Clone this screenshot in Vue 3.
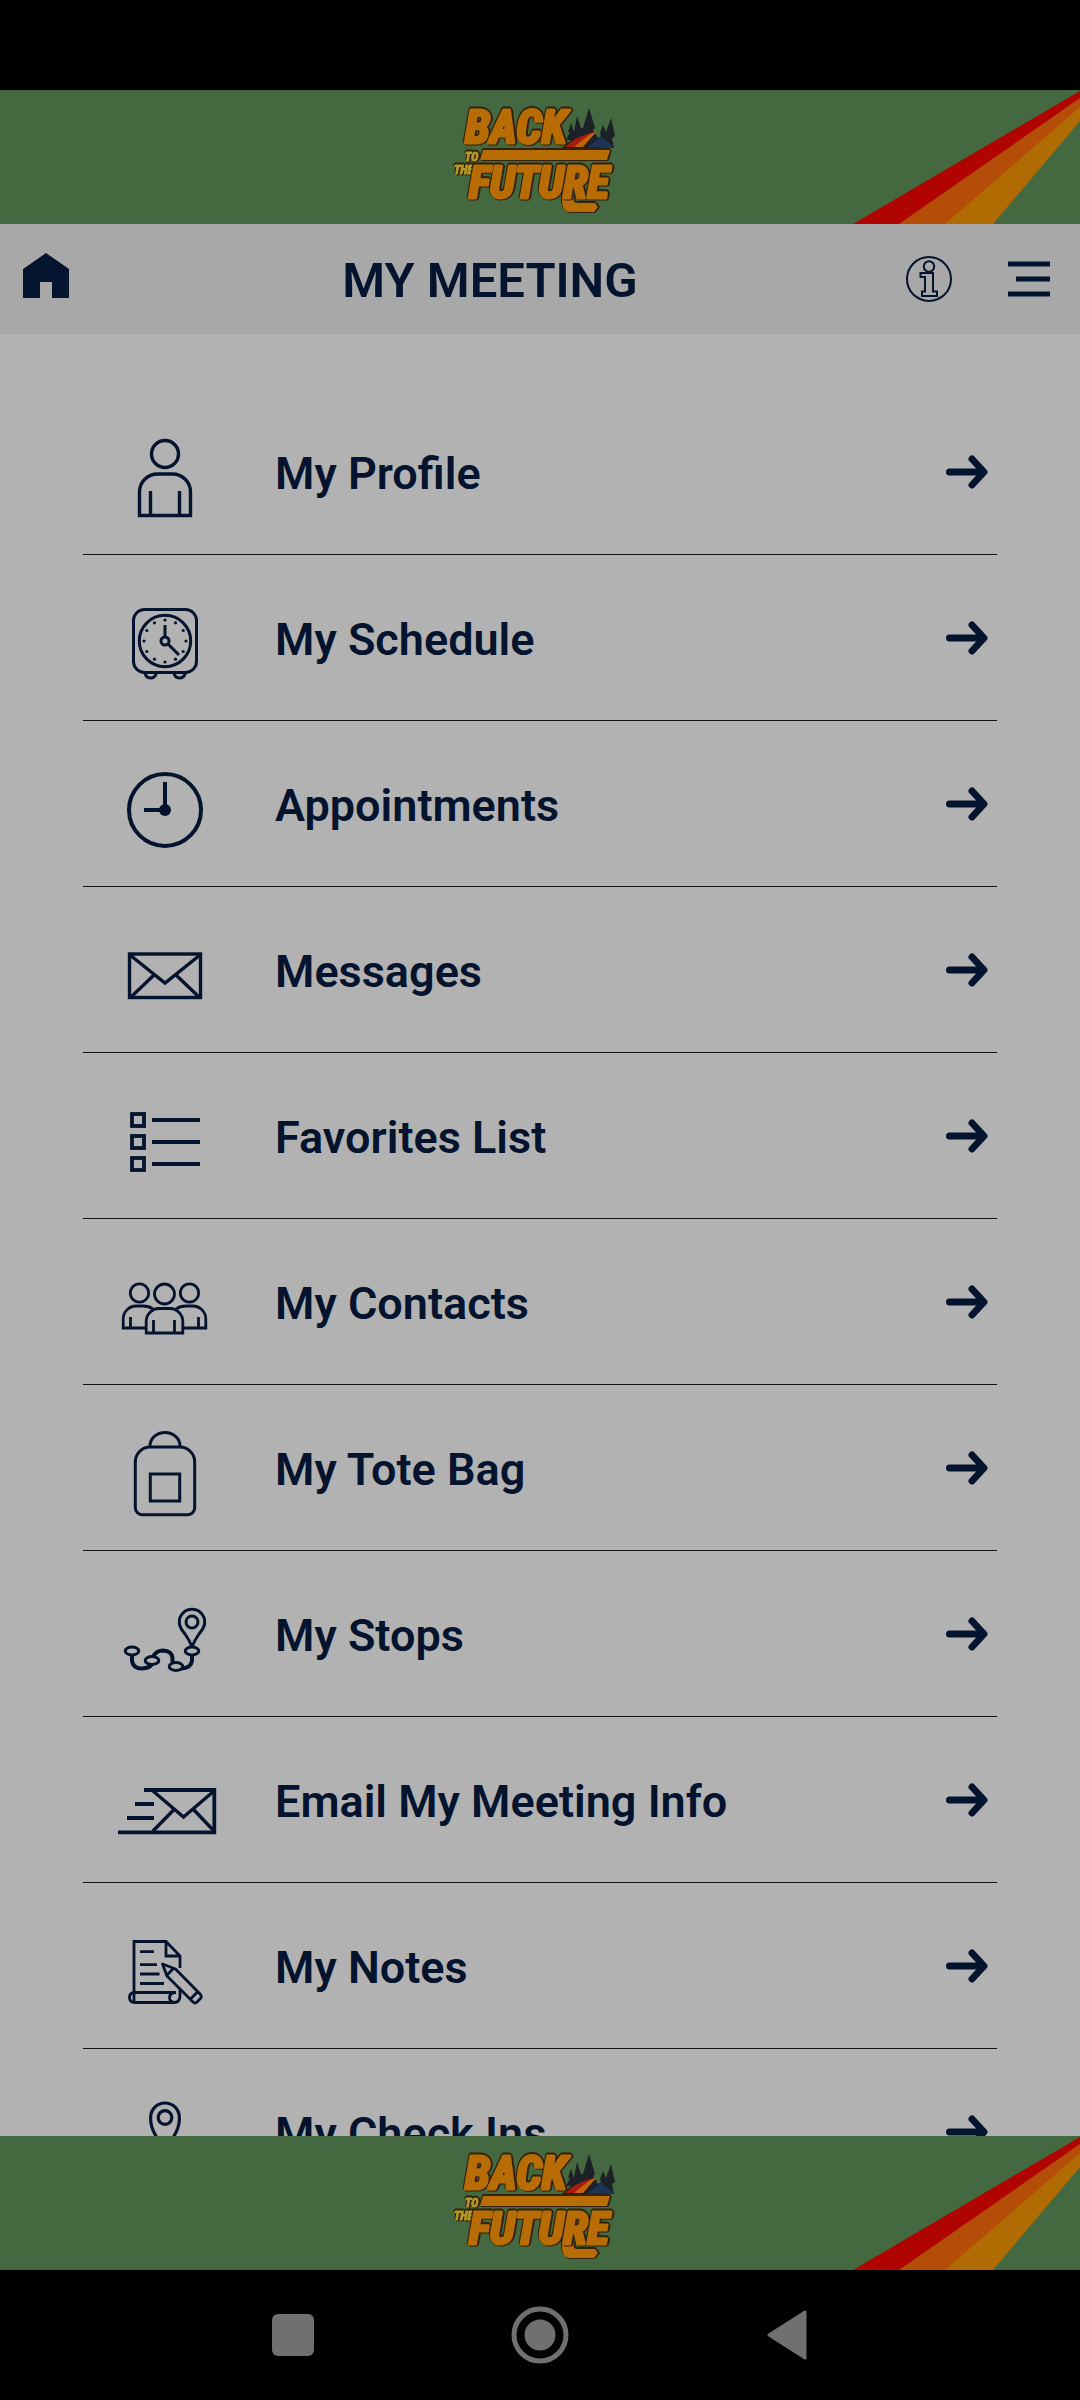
<script setup>
import { h } from 'vue'

const items = [
  { id: 'profile', label: 'My Profile' },
  { id: 'schedule', label: 'My Schedule' },
  { id: 'appointments', label: 'Appointments' },
  { id: 'messages', label: 'Messages' },
  { id: 'favorites', label: 'Favorites List' },
  { id: 'contacts', label: 'My Contacts' },
  { id: 'tote', label: 'My Tote Bag' },
  { id: 'stops', label: 'My Stops' },
  { id: 'email', label: 'Email My Meeting Info' },
  { id: 'notes', label: 'My Notes' },
  { id: 'checkins', label: 'My Check Ins' },
]

const ticks = Array.from({ length: 12 }, (_, i) => {
  const a = (i * Math.PI) / 6
  return { x: 60 + 21 * Math.sin(a), y: 66 - 21 * Math.cos(a) }
})

// Sponsor banner, shown above the header and below the list
const logoLine = (text, x, y, size, fill, weight) =>
  h('text', { x, y, 'font-size': size, fill, stroke: fill, 'stroke-width': weight }, text)

const Banner = () => [
  h('svg', { viewBox: '0 0 200 134', width: 200, height: 134, role: 'img', 'aria-label': 'Back to the Future' }, [
    h('path', { fill: '#1b2127', d: 'M122 58L131 50L126 50L130 42L128 42L131 33L134 42L137 26L141 38L143 38L149 18L155 38L153 40L158 48L161 46L160 43L163 35L166 42L171 28L175 46L172 48L174 58Z' }),
    h('path', { fill: '#a81c0c', d: 'M125 57Q136 46 152 43L157 41L142 57Z' }),
    h('path', { fill: '#c4620c', d: 'M134 57L150 44L157 41L143 57Z' }),
    h('path', { fill: '#1c3557', d: 'M148 57L161 47L172 55L172 58Z' }),
    h('g', { class: 'lettering', 'stroke-linejoin': 'round' }, [
      h('path', { fill: '#b86c04', d: 'M43 60H170L167 70H40Z' }),
      h('path', { fill: '#b86c04', d: 'M122 106H134Q132 113 137 113H155L158 117L154 122H129Q121 121 122 106Z' }),
      logoLine('TO', 25, 71, 12, '#b39a24', 1),
      logoLine('THE', 14, 84, 12, '#b39a24', 1),
    ]),
    h('g', { class: 'lettering', 'stroke-linejoin': 'round' }, [
      logoLine('BACK', 25, 53, 46, '#b86c04', 3),
      logoLine('FUTURE', 29, 108, 45, '#b86c04', 3),
    ]),
  ]),
  h('svg', { class: 'rays', viewBox: '0 0 240 134', width: 240, height: 134, 'aria-hidden': 'true' }, [
    h('path', { fill: '#b00400', d: 'M13 134L240 1V9L60 134Z' }),
    h('path', { fill: '#b44d07', d: 'M59 134L240 8V18L106 134Z' }),
    h('path', { fill: '#b06c02', d: 'M105 134L240 17V31L153 134Z' }),
  ]),
]
</script>

<template>
  <div class="page">
    <div class="status"></div>
    <div class="banner"><Banner /></div>

    <header class="header">
      <button class="home" aria-label="Home">
        <svg width="46" height="46" viewBox="0 0 46 46"><path d="M23 0L46 16V45H29V29H17V45H0V16Z" fill="currentColor" /></svg>
      </button>
      <h1>MY MEETING</h1>
      <button class="info" aria-label="Information">
        <svg width="48" height="48" viewBox="0 0 48 48" fill="none" stroke="currentColor" stroke-width="2">
          <circle cx="24" cy="24" r="22" />
          <circle cx="24" cy="11.500" r="5.200" />
          <path d="M15.500 18H28V36.500H32V41H17V36.500H20V22H15.500Z" />
        </svg>
      </button>
      <button class="menu" aria-label="Menu">
        <svg width="42" height="36" viewBox="0 0 42 36" stroke="currentColor" stroke-width="5"><path d="M0 3H42M8 18H42M0 33H42" /></svg>
      </button>
    </header>

    <main>
      <ul class="list">
        <li v-for="item in items" :key="item.id">
          <a href="#" class="row">
            <svg class="icon" viewBox="0 0 120 125" aria-hidden="true">
              <g v-if="item.id === 'profile'" stroke-width="3.400">
                <circle cx="60" cy="45" r="13.500" />
                <path d="M34.500 106.500V83A18 18 0 0 1 52.500 65H67.500A18 18 0 0 1 85.500 83V106.500ZM45.500 82V106M74.500 82V106" />
              </g>
              <g v-else-if="item.id === 'schedule'" stroke-width="3">
                <rect x="28.500" y="34.500" width="63" height="63" rx="11" />
                <circle cx="60" cy="66" r="25.700" />
                <circle cx="60" cy="66" r="4" />
                <path d="M60 50V62M63 69L74 80M40 98Q41 103 45.500 103T51.500 98M69 98Q70 103 74.500 103T80.500 98" />
                <circle v-for="(t, i) in ticks" :key="i" :cx="t.x" :cy="t.y" r="1.600" class="solid" />
              </g>
              <g v-else-if="item.id === 'appointments'" stroke-width="4">
                <circle cx="60" cy="69" r="36" />
                <path d="M60 41V69H39" />
                <circle cx="60" cy="69" r="6" class="solid" />
              </g>
              <g v-else-if="item.id === 'messages'" stroke-width="3.400">
                <rect x="24.500" y="47" width="71" height="43.500" />
                <path d="M25 48L60 76L95 48M26 90L49 68M71 68L94 90" />
              </g>
              <g v-else-if="item.id === 'favorites'" stroke-width="3.800">
                <rect x="27" y="41" width="12" height="12" />
                <rect x="27" y="63" width="12" height="12" />
                <rect x="27" y="85" width="12" height="12" />
                <path d="M47 47H95M47 69H95M47 91H95" />
              </g>
              <g v-else-if="item.id === 'contacts'" stroke-width="2.800">
                <circle cx="34.500" cy="54" r="9.200" />
                <circle cx="59.500" cy="55" r="10" />
                <circle cx="84.500" cy="54" r="9.200" />
                <path d="M41 89H18.200V80A13 13 0 0 1 31 67H38Q44 67 48 70M78 89H100.800V80A13 13 0 0 0 88 67H81Q75 67 71 70M25.500 78V89M93.500 78V89" />
                <path d="M41.200 94V82A13 13 0 0 1 54 69.500H65A13 13 0 0 1 77.800 82V94ZM48.500 81V94M69.500 81V94" />
              </g>
              <g v-else-if="item.id === 'tote'" stroke-width="3">
                <path d="M30.300 57A15 15 0 0 1 45 42H75A15 15 0 0 1 89.700 57V103A7 7 0 0 1 83 109.700H37A7 7 0 0 1 30.300 103ZM45 41A15 13.500 0 0 1 75 41" />
                <rect x="45.300" y="69" width="29.400" height="27" />
              </g>
              <g v-else-if="item.id === 'stops'" stroke-width="3">
                <path d="M87 76Q85 70 80 63Q74 56 74.300 51A12.700 12.700 0 0 1 99.700 51Q100 56 94 63Q89 70 87 76Z" />
                <circle cx="87" cy="51" r="6" />
                <g stroke-width="4">
                  <path d="M27 84V90Q28 97.500 37 97.500Q45 97 47 93M48 86Q51 79.500 58 79.500Q67 80 67.500 87V91M87 84V90Q86 97 76 97.500" />
                </g>
                <ellipse cx="27" cy="80" rx="6.800" ry="4" />
                <ellipse cx="47" cy="89.500" rx="6.800" ry="4" class="cover" />
                <ellipse cx="71" cy="95.500" rx="6.800" ry="4" class="cover" />
                <ellipse cx="87" cy="80" rx="6.800" ry="4" class="cover" />
              </g>
              <g v-else-if="item.id === 'email'" stroke-width="3.800">
                <path d="M39 53H109.300V95.300H13M30 67H49M22 81H49" />
                <path stroke-width="3.400" d="M48 54L78.500 80L109 54M48 94L68.500 73M89 73L109 94" />
              </g>
              <g v-else-if="item.id === 'notes'" stroke-width="2.800">
                <path d="M29 99V38.500H61L75 53V65M61 38.500V53H75M75 86V93Q75 99.500 69 99.500H29" />
                <path d="M71 89.500H29Q24.500 90 24.500 94.500T29 99.500M71 89.500Q64.500 90 64.500 94.500T70 99.500" />
                <path d="M35 48.700H49M35 61.700H52M35 71H54.500M35 80.500H59" />
                <path stroke-linejoin="round" d="M57.500 61L62 73L88 99Q90 101 92 99L95.500 95.500Q97 93.500 95.500 91.500L70.500 66ZM62 72L68 66M85.500 96L92.500 89" />
              </g>
              <g v-else stroke-width="3.200">
                <path d="M60 86Q57 78 51 67Q45 57 45.700 48A14.300 14 0 0 1 74.300 48Q75 57 69 67Q63 78 60 86Z" />
                <circle cx="60" cy="48.500" r="6.800" />
                <path d="M46 74L40 71L22 78V110L40 102L60 110L80 102L98 110V78L80 71L74 74" />
              </g>
            </svg>
            <span class="label">{{ item.label }}</span>
            <svg class="arrow" width="42" height="34" viewBox="0 0 42 34" aria-hidden="true">
              <path d="M3.500 17H37M26 4L38 17L26 30" />
            </svg>
          </a>
        </li>
      </ul>
    </main>

    <div class="banner"><Banner /></div>

    <nav class="system">
      <button aria-label="Recent apps">
        <svg width="42" height="42"><rect width="42" height="42" rx="6" /></svg>
      </button>
      <button aria-label="Home screen">
        <svg width="58" height="58"><circle cx="29" cy="29" r="26" fill="none" stroke="#707070" stroke-width="5" /><circle cx="29" cy="29" r="15.500" /></svg>
      </button>
      <button aria-label="Back">
        <svg width="40" height="50" viewBox="0 0 40 50"><path d="M2 25L38 2V48Z" stroke="#707070" stroke-width="3" stroke-linejoin="round" /></svg>
      </button>
    </nav>
  </div>
</template>

<style>
body {
  background: #000;
}
</style>

<style scoped>
.page {
  display: flex;
  flex-direction: column;
  height: 100vh;
  background: #b2b2b2;
  color: #04142e;
  font-family: Roboto, sans-serif;
}
button {
  display: flex;
  align-items: center;
  justify-content: center;
  padding: 0;
  border: 0;
  background: none;
  color: inherit;
}
.status {
  flex: none;
  height: 90px;
  background: #000;
}
.banner {
  position: relative;
  flex: none;
  display: flex;
  justify-content: center;
  height: 134px;
  overflow: hidden;
  background: #44683f;
}
.banner :deep(.lettering) {
  font-family: "Roboto Condensed", "Liberation Sans Narrow", Roboto, sans-serif;
  font-style: italic;
  font-weight: 700;
  filter: drop-shadow(1px 1px 0 #33230c) drop-shadow(-1px -1px 0 #33230c) drop-shadow(1px -1px 0 #33230c);
}
.banner :deep(.rays) {
  position: absolute;
  top: 0;
  right: 0;
}
.header {
  flex: none;
  display: flex;
  align-items: stretch;
  height: 110px;
  background: #a8a8a8;
}
.home {
  width: 92px;
  margin-right: 8px;
  padding-bottom: 6px;
}
.info {
  width: 98px;
}
.menu {
  width: 102px;
}
h1 {
  flex: 1;
  margin: 0;
  font-size: 49px;
  font-weight: 600;
  line-height: 114px;
  text-align: center;
}
main {
  flex: 1;
  min-height: 0;
  overflow: hidden;
}
.list {
  margin: 0;
  padding: 55px 83px 0;
  list-style: none;
}
.list li {
  border-bottom: 1px solid #141416;
}
.row {
  display: flex;
  align-items: center;
  height: 165px;
  padding: 0 9px 0 22px;
  color: inherit;
  text-decoration: none;
}
.icon {
  flex: none;
  width: 120px;
  height: 125px;
  fill: none;
  stroke: currentColor;
}
.icon .solid {
  fill: currentColor;
  stroke: none;
}
.icon .cover {
  fill: #b2b2b2;
}
.label {
  flex: 1;
  margin-left: 50px;
  padding-top: 4px;
  font-size: 45px;
  font-weight: 600;
  line-height: 52px;
}
.arrow {
  flex: none;
  fill: none;
  stroke: currentColor;
  stroke-width: 7;
  stroke-linecap: round;
  stroke-linejoin: round;
}
.system {
  flex: none;
  display: flex;
  justify-content: center;
  height: 130px;
  background: #000;
}
.system button {
  width: 247px;
}
.system svg {
  fill: #707070;
}
</style>
